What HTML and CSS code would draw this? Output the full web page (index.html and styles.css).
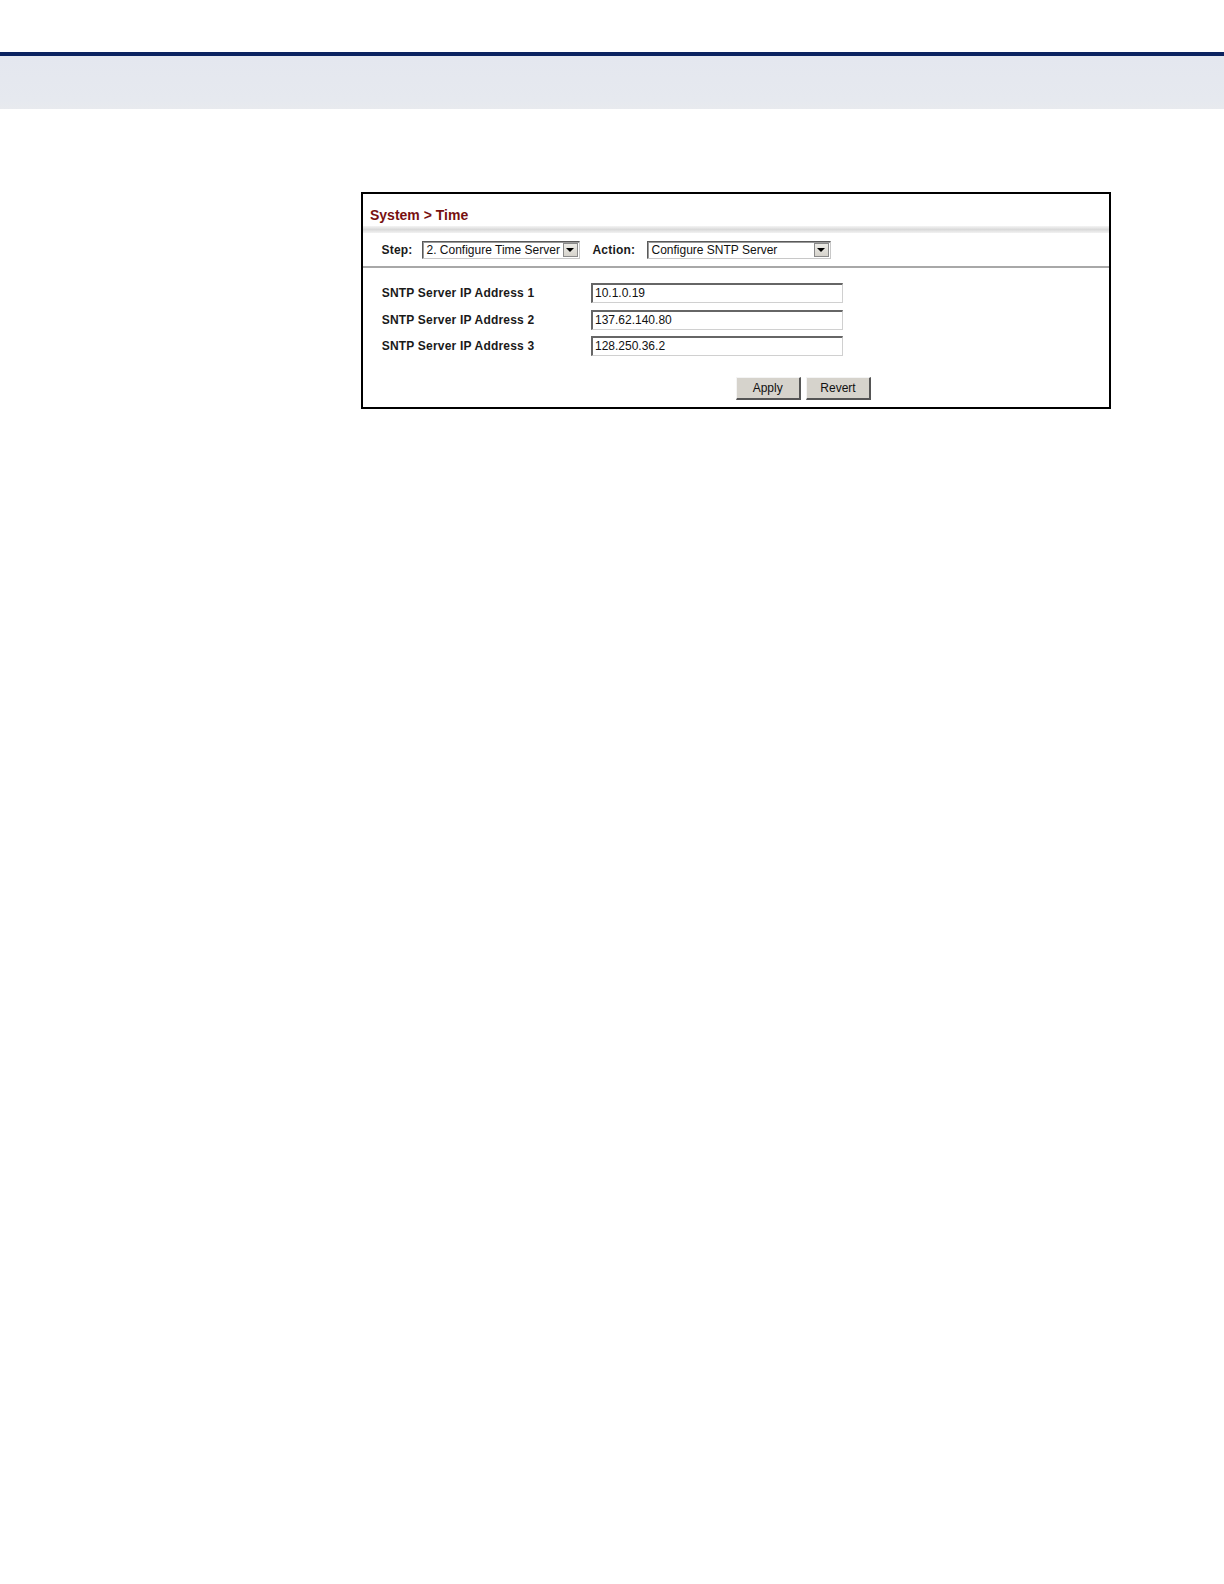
FILE: index.html
```html
<!DOCTYPE html>
<html>
<head>
<meta charset="utf-8">
<title>System &gt; Time</title>
<link rel="stylesheet" href="styles.css">
</head>
<body>
<div class="page-header"></div>
<div class="frame">
  <div class="title">System &gt; Time</div>
  <div class="title-band"></div>
  <div class="step-row">
    <span class="lbl">Step:</span>
    <div class="select sel-step"><span class="sel-text">2. Configure Time Server</span><span class="sel-btn"><span class="tri"></span></span></div>
    <span class="lbl lbl-action">Action:</span>
    <div class="select sel-action"><span class="sel-text">Configure SNTP Server</span><span class="sel-btn"><span class="tri"></span></span></div>
  </div>
  <div class="rule"></div>
  <div class="form">
    <div class="row"><span class="flabel">SNTP Server IP Address 1</span><div class="input">10.1.0.19</div></div>
    <div class="row"><span class="flabel">SNTP Server IP Address 2</span><div class="input">137.62.140.80</div></div>
    <div class="row"><span class="flabel">SNTP Server IP Address 3</span><div class="input">128.250.36.2</div></div>
  </div>
  <div class="buttons">
    <div class="btn">Apply</div>
    <div class="btn">Revert</div>
  </div>
</div>
</body>
</html>
```

FILE: styles.css
```css
html, body { margin: 0; padding: 0; background: #ffffff; }
body { font-family: "Liberation Sans", Arial, sans-serif; color: #000; }

.page-header {
  margin-top: 52px;
  height: 53px;
  border-top: 4px solid #0b2360;
  background: linear-gradient(#e4e7ef, #e6e9ef 85%, #e8eaee);
}

.frame {
  margin-top: 83px;
  margin-left: 361px;
  width: 746px;
  border: 2px solid #000;
  display: flex;
  flex-direction: column;
}

.title {
  height: 32px;
  padding-left: 7px;
  font-size: 14px;
  font-weight: bold;
  color: #781010;
  line-height: 42px;
  box-sizing: border-box;
}
.title-band {
  height: 7px;
  background: linear-gradient(#f4f4f4, #dadada 50%, #f2f2f2);
}

.step-row {
  display: flex;
  align-items: center;
  height: 33px;
  padding-left: 18.5px;
  padding-top: 1px;
  box-sizing: border-box;
}
.lbl { font-size: 12px; font-weight: bold; color: #1a1a1a; width: 40px; letter-spacing: 0.2px; }
.lbl-action { width: 54px; margin-left: 13px; }

.select {
  display: flex;
  align-items: center;
  height: 18px;
  box-sizing: border-box;
  border-top: 1px solid #5a5a5a;
  border-left: 1px solid #5a5a5a;
  border-right: 1px solid #c8c8c8;
  border-bottom: 1px solid #c8c8c8;
  box-shadow: inset 1px 1px 0 #9a9a9a;
  background: #fff;
}
.sel-step { width: 158px; }
.sel-action { width: 184px; }
.sel-text {
  flex: 1;
  font-size: 12px;
  padding-left: 4px;
  color: #111;
  white-space: nowrap;
  overflow: hidden;
}
.sel-btn {
  width: 15px;
  height: 14px;
  margin-right: 1px;
  background: linear-gradient(#ecebe6, #d6d3cc);
  border: 1px solid #8a8a8a;
  box-sizing: border-box;
  display: flex;
  align-items: center;
  justify-content: center;
}
.tri {
  width: 0; height: 0;
  border-left: 4px solid transparent;
  border-right: 4px solid transparent;
  border-top: 4px solid #000;
}

.rule {
  height: 2px;
  background: #a8a8a8;
}

.form {
  display: flex;
  flex-direction: column;
  gap: 6.5px;
  padding-top: 15px;
  padding-left: 18.7px;
}
.row { display: flex; align-items: center; height: 20px; }
.flabel { width: 209.3px; font-size: 12px; font-weight: bold; color: #1a1a1a; letter-spacing: 0.2px; }
.input {
  width: 252px;
  height: 20px;
  box-sizing: border-box;
  border-top: 2px solid #666;
  border-left: 2px solid #666;
  border-right: 1px solid #d0d0d0;
  border-bottom: 1px solid #d0d0d0;
  font-size: 12px;
  line-height: 17px;
  padding-left: 2px;
  color: #111;
}

.buttons {
  display: flex;
  gap: 5.3px;
  padding-left: 372.7px;
  padding-top: 21px;
  padding-bottom: 7px;
}
.btn {
  width: 65px;
  height: 23px;
  box-sizing: border-box;
  background: #d6d3cc;
  border-top: 1px solid #f4f4f4;
  border-left: 1px solid #f4f4f4;
  border-right: 2px solid #555;
  border-bottom: 2px solid #555;
  font-size: 12px;
  color: #111;
  display: flex;
  align-items: center;
  justify-content: center;
}
```
